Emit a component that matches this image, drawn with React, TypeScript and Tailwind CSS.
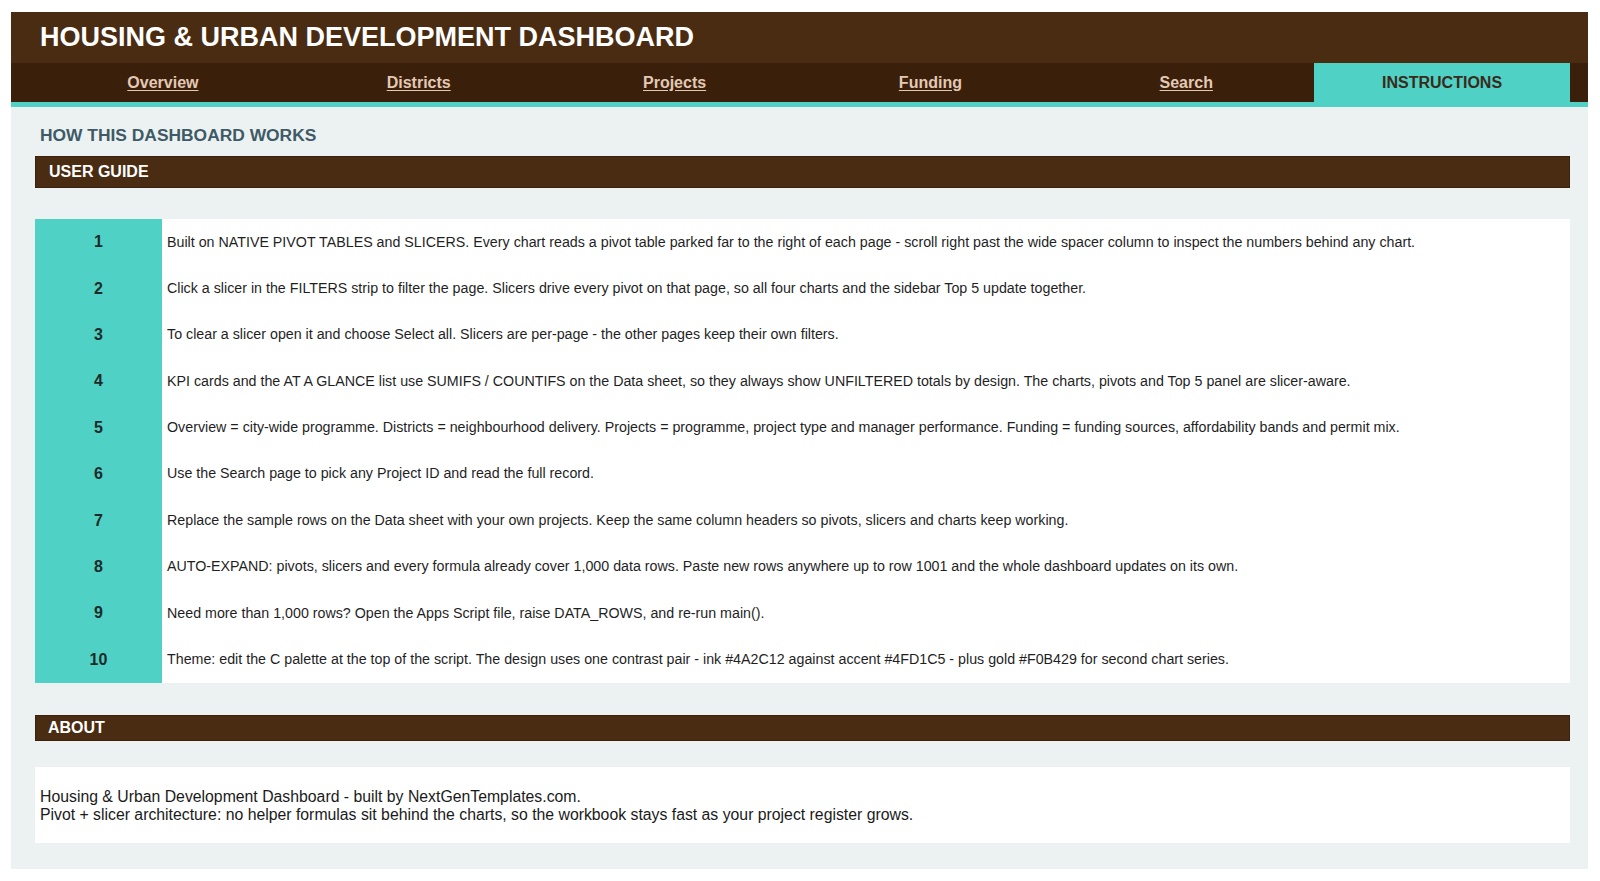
const tabs = ["Overview", "Districts", "Projects", "Funding", "Search"];

const steps = [
  "Built on NATIVE PIVOT TABLES and SLICERS. Every chart reads a pivot table parked far to the right of each page - scroll right past the wide spacer column to inspect the numbers behind any chart.",
  "Click a slicer in the FILTERS strip to filter the page. Slicers drive every pivot on that page, so all four charts and the sidebar Top 5 update together.",
  "To clear a slicer open it and choose Select all. Slicers are per-page - the other pages keep their own filters.",
  "KPI cards and the AT A GLANCE list use SUMIFS / COUNTIFS on the Data sheet, so they always show UNFILTERED totals by design. The charts, pivots and Top 5 panel are slicer-aware.",
  "Overview = city-wide programme. Districts = neighbourhood delivery. Projects = programme, project type and manager performance. Funding = funding sources, affordability bands and permit mix.",
  "Use the Search page to pick any Project ID and read the full record.",
  "Replace the sample rows on the Data sheet with your own projects. Keep the same column headers so pivots, slicers and charts keep working.",
  "AUTO-EXPAND: pivots, slicers and every formula already cover 1,000 data rows. Paste new rows anywhere up to row 1001 and the whole dashboard updates on its own.",
  "Need more than 1,000 rows? Open the Apps Script file, raise DATA_ROWS, and re-run main().",
  "Theme: edit the C palette at the top of the script. The design uses one contrast pair - ink #4A2C12 against accent #4FD1C5 - plus gold #F0B429 for second chart series.",
];

function SectionBar({ label, tall }: { label: string; tall?: boolean }) {
  return (
    <div
      className={
        tall
          ? "flex h-[32px] items-center border border-[#3a2210] bg-[#4A2C12] pl-[13px] text-[16px] font-bold text-white"
          : "flex h-[26px] items-center border border-[#3a2210] bg-[#4A2C12] pl-[12px] text-[16px] font-bold text-white"
      }
    >
      {label}
    </div>
  );
}

export default function App() {
  return (
    <div className="min-h-screen bg-white pb-[11px] pl-[11px] pr-[12px] pt-[12px] font-['Liberation_Sans',Arial,sans-serif]">
      <div className="w-[1577px]">
        <header className="flex h-[51px] items-center bg-[#4A2C12] pl-[29px]">
          <h1 className="text-[27px] font-bold leading-none text-white">HOUSING &amp; URBAN DEVELOPMENT DASHBOARD</h1>
        </header>

        <nav className="flex h-[39px] bg-[#3A1F0B] pl-[24px] pr-[18px]">
          <div className="grid flex-1 grid-cols-6">
            {tabs.map((t) => (
              <a
                key={t}
                href="#"
                className="flex items-center justify-center text-[16px] font-bold text-[#E3C9B4] underline underline-offset-2"
              >
                {t}
              </a>
            ))}
            <div className="flex items-center justify-center bg-[#4FD1C5] text-[16px] font-bold text-[#3A2A1A]">
              INSTRUCTIONS
            </div>
          </div>
        </nav>
        <div className="h-[5px] bg-[#4FD1C5]" />

        <main className="bg-[#ECF2F2] pb-[26px] pl-[24px] pr-[18px] pt-[16px]">
          <h2 className="pl-[5px] text-[17.4px] font-bold leading-[24px] text-[#3F5A66]">HOW THIS DASHBOARD WORKS</h2>

          <div className="mt-[9px]">
            <SectionBar label="USER GUIDE" tall />
          </div>

          <div className="mt-[31px] bg-white">
            {steps.map((s, i) => (
              <div key={i} className="flex h-[46.4px]">
                <div className="flex w-[127px] shrink-0 items-center justify-center bg-[#4FD1C5] text-[16px] font-bold text-[#1E2B29]">
                  {i + 1}
                </div>
                <div className="flex items-center pl-[5px] text-[14.25px] text-[#1f1f1f]">{s}</div>
              </div>
            ))}
          </div>

          <div className="mt-[32px]">
            <SectionBar label="ABOUT" />
          </div>

          <div className="mt-[26px] flex h-[76px] flex-col justify-center bg-white pl-[5px] pt-[2px] text-[15.8px] leading-[18px] text-[#1a1a1a]">
            <p>Housing &amp; Urban Development Dashboard - built by NextGenTemplates.com.</p>
            <p>Pivot + slicer architecture: no helper formulas sit behind the charts, so the workbook stays fast as your project register grows.</p>
          </div>
        </main>
      </div>
    </div>
  );
}
